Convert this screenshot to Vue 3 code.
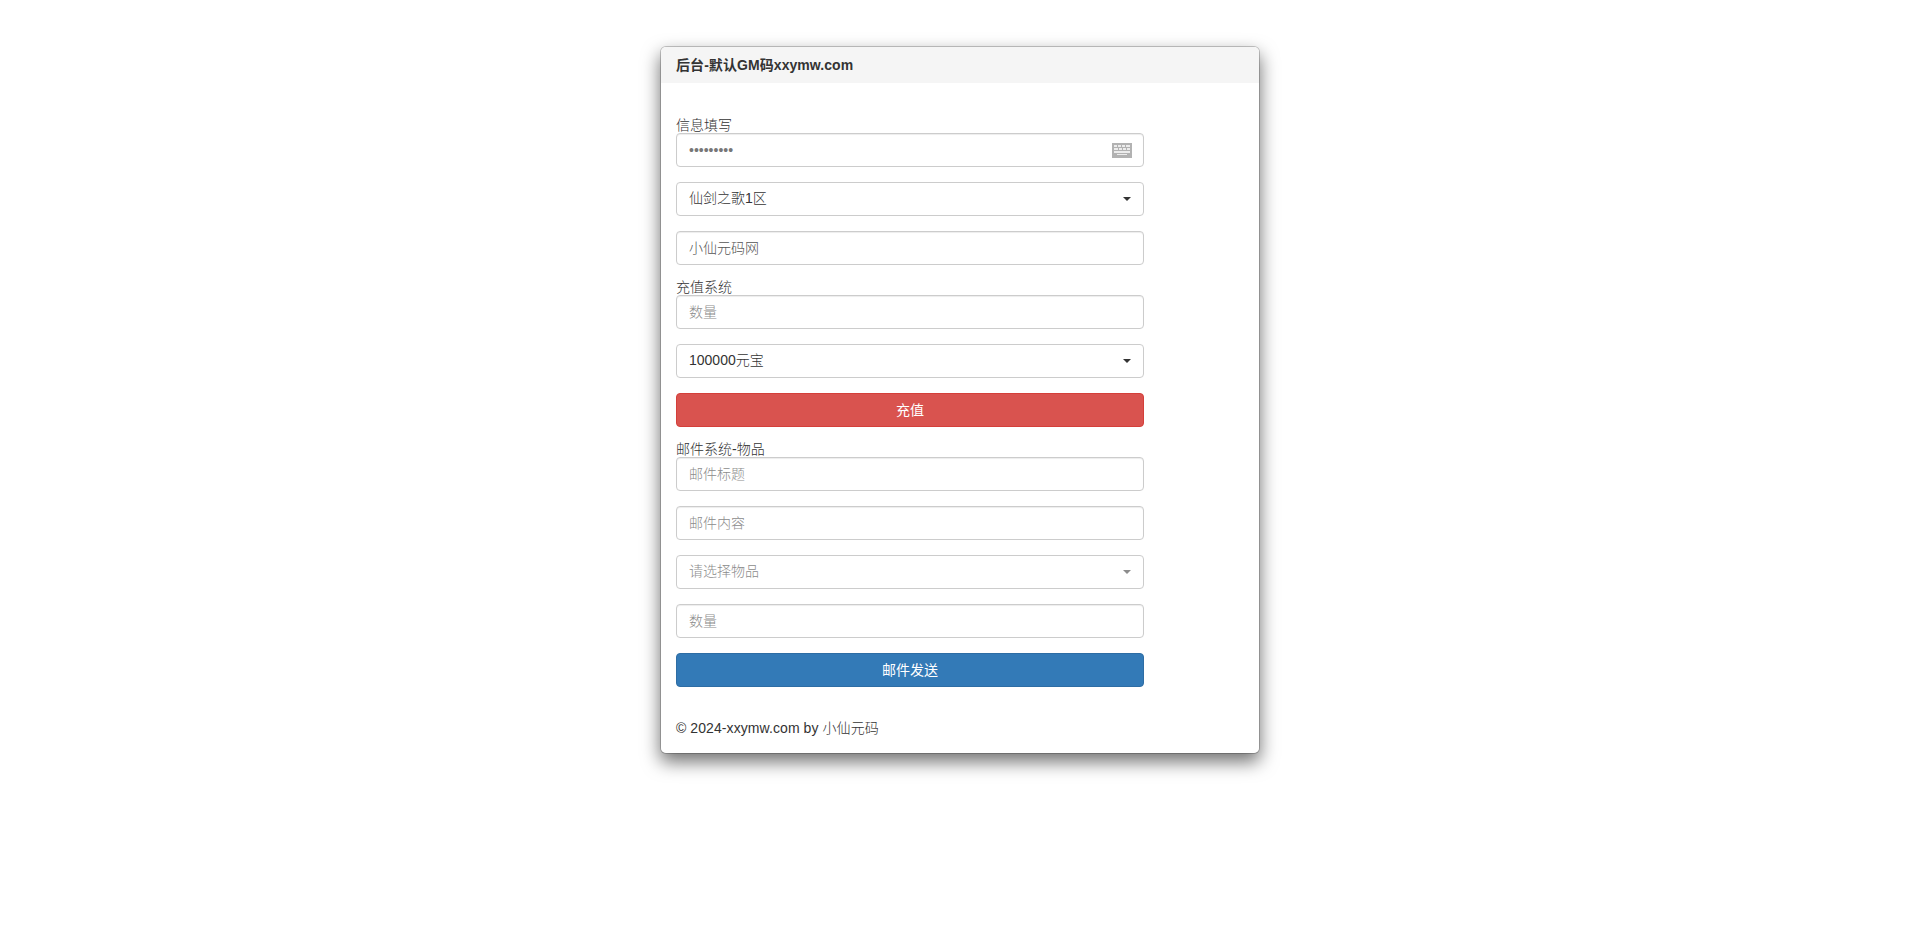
<script setup>
</script>

<template>
  <main class="page">
    <section class="card">
      <header class="card-head">后台-默认GM码xxymw.com</header>
      <div class="card-body">
        <label class="label">信息填写</label>
        <div class="group pw">
          <input class="control dots" type="password" value="123456789" />
          <svg class="kbd" viewBox="0 0 20 15" width="20" height="15" aria-hidden="true">
            <rect width="20" height="15" fill="#b2b2b2" />
            <g fill="#ececec">
              <rect x="2" y="2" width="3" height="2" />
              <rect x="6" y="2" width="3" height="2" />
              <rect x="10" y="2" width="3" height="2" />
              <rect x="14" y="2" width="4" height="2" />
              <rect x="2" y="5" width="4" height="2" />
              <rect x="7" y="5" width="3" height="2" />
              <rect x="11" y="5" width="3" height="2" />
              <rect x="15" y="5" width="3" height="2" />
              <rect x="2" y="8" width="16" height="2" />
              <rect x="5" y="11" width="10" height="1" />
            </g>
          </svg>
        </div>
        <div class="group">
          <div class="control select"><span>仙剑之歌1区</span><i class="caret"></i></div>
        </div>
        <div class="group">
          <input class="control value" type="text" value="小仙元码网" />
        </div>

        <label class="label">充值系统</label>
        <div class="group">
          <input class="control" type="text" placeholder="数量" />
        </div>
        <div class="group">
          <div class="control select"><span>100000元宝</span><i class="caret"></i></div>
        </div>
        <div class="group">
          <button class="btn danger" type="button">充值</button>
        </div>

        <label class="label">邮件系统-物品</label>
        <div class="group">
          <input class="control" type="text" placeholder="邮件标题" />
        </div>
        <div class="group">
          <input class="control" type="text" placeholder="邮件内容" />
        </div>
        <div class="group">
          <div class="control select muted"><span>请选择物品</span><i class="caret"></i></div>
        </div>
        <div class="group">
          <input class="control" type="text" placeholder="数量" />
        </div>
        <div class="group">
          <button class="btn primary" type="button">邮件发送</button>
        </div>

        <footer class="foot">© 2024-xxymw.com by 小仙元码</footer>
      </div>
    </section>
  </main>
</template>

<style scoped>
.page {
  display: flex;
  justify-content: center;
  align-items: flex-start;
  box-sizing: border-box;
  min-height: 100vh;
  padding-top: 46px;
  font-family: "Liberation Sans", "Noto Sans CJK SC", sans-serif;
  font-size: 14px;
  color: #333;
}
.card {
  width: 600px;
  box-sizing: border-box;
  background: #fff;
  border: 1px solid rgba(0, 0, 0, 0.2);
  border-radius: 6px;
  box-shadow: 0 8px 18px rgba(0, 0, 0, 0.55);
  background-clip: padding-box;
}
.card-head {
  padding: 10px 15px;
  height: 36px;
  box-sizing: border-box;
  line-height: 16px;
  font-weight: 700;
  letter-spacing: 0.07px;
  background: #f5f5f5;
  border-radius: 5px 5px 0 0;
}
.card-body {
  padding: 35px 15px 0;
}
.label {
  display: block;
  height: 15px;
  line-height: 15px;
  color: #333;
  font-weight: 300;
}
.group {
  position: relative;
  width: 468px;
  margin-bottom: 15px;
}
.control {
  display: block;
  width: 100%;
  height: 34px;
  box-sizing: border-box;
  padding: 6px 12px;
  font: inherit;
  font-weight: 300;
  line-height: 20px;
  color: #555;
  background: #fff;
  border: 1px solid #ccc;
  border-radius: 4px;
  box-shadow: inset 0 1px 1px rgba(0, 0, 0, 0.075);
  outline: none;
}
.control.dots {
  color: #777;
}
.control.value {
  padding-bottom: 7px;
  padding-top: 5px;
}
.control::placeholder {
  color: #8c8c8c;
  opacity: 1;
}
.select {
  display: flex;
  align-items: center;
  justify-content: space-between;
  color: #333;
  box-shadow: none;
}
.select span {
  margin-bottom: 2px;
}
.select.muted {
  color: #8c8c8c;
}
.caret {
  width: 0;
  height: 0;
  border-top: 4px solid currentColor;
  border-left: 4px solid transparent;
  border-right: 4px solid transparent;
}
.kbd {
  position: absolute;
  top: 10px;
  right: 12px;
}
.btn {
  display: block;
  width: 100%;
  height: 34px;
  padding: 6px 12px;
  font: inherit;
  line-height: 20px;
  color: #fff;
  border: 1px solid transparent;
  border-radius: 4px;
}
.danger {
  background: #d9534f;
  border-color: #d43f3a;
}
.primary {
  background: #337ab7;
  border-color: #2e6da4;
}
.foot {
  padding: 16px 0 15px;
  line-height: 20px;
  letter-spacing: 0.08px;
  color: #333;
  font-weight: 300;
}
</style>
